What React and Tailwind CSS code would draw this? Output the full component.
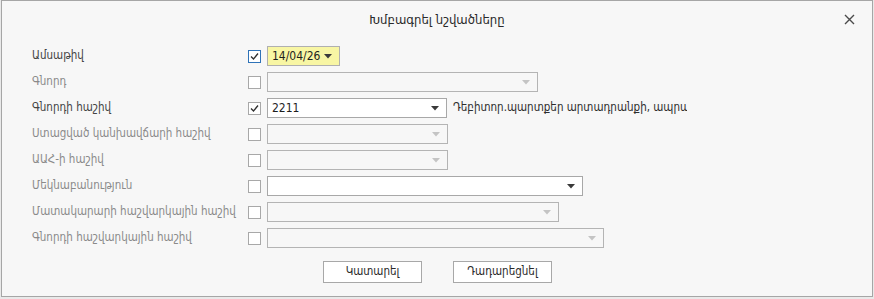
import React from "react";

const rows = [
  { label: "Ամսաթիվ", enabled: true, checked: true, focus: true, kind: "date", value: "14/04/26", width: 73 },
  { label: "Գնորդ", enabled: false, width: 271 },
  { label: "Գնորդի հաշիվ", enabled: true, checked: true, value: "2211", width: 180, note: "Դեբիտոր.պարտքեր արտադրանքի, ապրանքների, աշխատանքների, ծառայությունների դիմաց" },
  { label: "Ստացված կանխավճարի հաշիվ", enabled: false, width: 181 },
  { label: "ԱԱՀ-ի հաշիվ", enabled: false, width: 181 },
  { label: "Մեկնաբանություն", enabled: false, active: true, width: 316 },
  { label: "Մատակարարի հաշվարկային հաշիվ", enabled: false, width: 292 },
  { label: "Գնորդի հաշվարկային հաշիվ", enabled: false, width: 337 },
];

const Arrow = ({ dark }) => (
  <svg width="8" height="5" viewBox="0 0 8 5" className="shrink-0">
    <path d="M0 0 H8 L4 4.5 Z" fill={dark ? "#3a3a3a" : "#c4c4c4"} />
  </svg>
);

const Check = () => (
  <svg width="11" height="11" viewBox="0 0 11 11">
    <path d="M2 5.5 L4.5 8 L9 2.5" fill="none" stroke="#2f2f2f" strokeWidth="1.3" />
  </svg>
);

const Row = ({ row }) => {
  const labelColor = row.enabled ? "text-[#444444]" : "text-[#8a8a8a]";
  const live = row.enabled || row.active;
  return (
    <div className="flex h-[26px] items-center">
      <div className={`w-[216px] shrink-0 whitespace-nowrap ${labelColor}`}>{row.label}</div>
      <div
        className={`flex h-[13px] w-[13px] shrink-0 items-center justify-center bg-white border ${
          row.focus ? "border-[#2f73b8]" : "border-[#a8a8a8]"
        }`}
      >
        {row.checked && <Check />}
      </div>
      <div
        className={`ml-[6px] flex h-[20px] shrink-0 items-center justify-between border pl-[4px] pr-[7px] ${
          row.kind === "date"
            ? "bg-[#f8f6a4] border-[#b0b0b0]"
            : live
            ? "bg-white border-[#a8a8a8]"
            : "bg-[#f7f7f7] border-[#b4b4b4]"
        }`}
        style={{ width: row.width }}
      >
        <span className="text-[12px] text-[#1e1e1e]">{row.value}</span>
        <Arrow dark={live} />
      </div>
      {row.note && (
        <div className="ml-[6px] w-[234px] overflow-hidden whitespace-nowrap text-[#2e2e2e]">{row.note}</div>
      )}
    </div>
  );
};

export default function App() {
  return (
    <div className="h-[299px] w-[874px] bg-[#e9e9e9] font-['DejaVu_Sans_Condensed','DejaVu_Sans',sans-serif] text-[11.5px]">
      <div className="ml-[1px] h-[297px] w-[872px] border border-[#a6a6a6] bg-[#f7f7f7]">
        <div className="relative flex h-[42px] items-center justify-center pb-[4px]">
          <span className="text-[13px] text-[#2a2a2a]">Խմբագրել նշվածները</span>
          <svg
            width="11"
            height="11"
            viewBox="0 0 11 11"
            className="absolute right-[17px] top-[13px]"
          >
            <path d="M1 1 L10 10 M10 1 L1 10" stroke="#4a4a4a" strokeWidth="1.4" />
          </svg>
        </div>
        <div className="pl-[30px]">
          {rows.map((r) => (
            <Row key={r.label} row={r} />
          ))}
        </div>
        <div className="mt-[10px] flex gap-[31px] pl-[321px]">
          <button className="h-[22px] w-[99px] border border-[#a8a8a8] bg-white text-[#2a2a2a]">
            Կատարել
          </button>
          <button className="h-[22px] w-[99px] border border-[#a8a8a8] bg-white text-[#2a2a2a]">
            Դադարեցնել
          </button>
        </div>
      </div>
    </div>
  );
}
